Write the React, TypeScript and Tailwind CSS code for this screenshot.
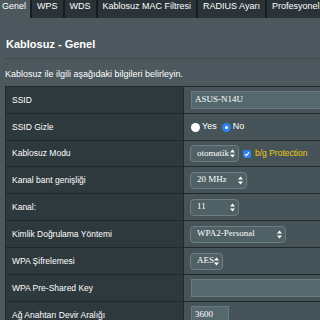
import React from 'react';

const tabs = ['Genel', 'WPS', 'WDS', 'Kablosuz MAC Filtresi', 'RADIUS Ayarı', 'Profesyonel'];

function Arrows() {
  return (
    <svg width="5" height="9" viewBox="0 0 5 9" className="shrink-0">
      <path d="M2.5 0.5 L5 3.5 L0 3.5 Z" fill="#ffffff" />
      <path d="M0 5.5 L5 5.5 L2.5 8.5 Z" fill="#ffffff" />
    </svg>
  );
}

function Select({ value, width }: { value: string; width: string }) {
  return (
    <div
      className={`flex h-[17px] ${width} items-center justify-between rounded-[4px] border border-[#6d7e84] bg-[#506166] pl-[6px] pr-[3px] font-['Liberation_Serif',serif] text-[9px] text-white`}
    >
      <span>{value}</span>
      <Arrows />
    </div>
  );
}

function Input({ value, width }: { value?: string; width: string }) {
  return (
    <div
      className={`ml-px flex h-[18px] ${width} items-center border border-[#687b81] bg-[#55686d] pl-[3px] font-['Liberation_Serif',serif] text-[9px] text-white`}
    >
      {value}
    </div>
  );
}

const rows: { label: string; h: string; value: React.ReactNode }[] = [
  { label: 'SSID', h: 'h-[27px]', value: <Input value="ASUS-N14U" width="w-[200px]" /> },
  {
    label: 'SSID Gizle',
    h: 'h-[27px]',
    value: (
      <div className="ml-px flex items-center text-[9px] text-white">
        <span className="h-[9px] w-[9px] rounded-full bg-white" />
        <span className="ml-[2px]">Yes</span>
        <span className="ml-[5px] flex h-[9px] w-[9px] items-center justify-center rounded-full bg-[#2f80ed]">
          <span className="h-[3px] w-[3px] rounded-full bg-white" />
        </span>
        <span className="ml-[2px]">No</span>
      </div>
    ),
  },
  {
    label: 'Kablosuz Modu',
    h: 'h-[26px]',
    value: (
      <div className="flex items-center">
        <Select value="otomatik" width="w-[49px]" />
        <span className="ml-[4px] flex h-[8px] w-[8px] items-center justify-center rounded-[2px] bg-[#2f80ed]">
          <svg width="6" height="6" viewBox="0 0 6 6">
            <path d="M1 3.2 L2.4 4.6 L5 1.4" stroke="#ffffff" strokeWidth="1.2" fill="none" />
          </svg>
        </span>
        <span className="ml-[4px] text-[8.5px] text-[#f2c811]">b/g Protection</span>
      </div>
    ),
  },
  { label: 'Kanal bant genişliği', h: 'h-[27px]', value: <Select value="20 MHz" width="w-[57px]" /> },
  { label: 'Kanal:', h: 'h-[27px]', value: <Select value="11" width="w-[49px]" /> },
  { label: 'Kimlik Doğrulama Yöntemi', h: 'h-[27px]', value: <Select value="WPA2-Personal" width="w-[96px]" /> },
  { label: 'WPA Şifrelemesi', h: 'h-[27px]', value: <Select value="AES" width="w-[33px]" /> },
  { label: 'WPA Pre-Shared Key', h: 'h-[27px]', value: <Input width="w-[200px]" /> },
  { label: 'Ağ Anahtarı Devir Aralığı', h: 'h-[27px]', value: <Input value="3600" width="w-[38px]" /> },
];

export default function App() {
  return (
    <div className="h-[320px] w-[320px] overflow-hidden bg-[#4c585d] font-['Liberation_Sans',Arial,sans-serif]">
      <div className="flex h-[18px] bg-[#2a3438] text-[9px] leading-[12px] text-white">
        {tabs.map((t, i) => (
          <div
            key={t}
            className={
              i === 0
                ? 'shrink-0 bg-[#4c585d] pl-[2px] pr-[4px]'
                : 'shrink-0 border-l-2 border-[#161c1f] px-[5px]'
            }
          >
            {t}
          </div>
        ))}
      </div>

      <div className="pl-[5px]">
        <h1 className="pl-px pt-[19px] text-[11px] font-bold leading-[14px] text-white">Kablosuz - Genel</h1>
        <div className="mt-[7px] h-px bg-[#3f4a4e]" />
        <p className="mt-[9px] text-[9px] leading-[12px] text-white">
          Kablosuz ile ilgili aşağıdaki bilgileri belirleyin.
        </p>

        <div className="mt-[6px] w-[330px] border-l border-t border-[#1f282b]">
          {rows.map((r) => (
            <div key={r.label} className={`flex ${r.h} border-b border-[#1f282b]`}>
              <div className="flex w-[178px] shrink-0 items-center border-r border-[#1f282b] bg-[#2e393d] pl-[6px] text-[8.5px] text-white">
                {r.label}
              </div>
              <div className="flex flex-1 items-center bg-[#465459] pl-[6px]">{r.value}</div>
            </div>
          ))}
        </div>
      </div>
    </div>
  );
}
